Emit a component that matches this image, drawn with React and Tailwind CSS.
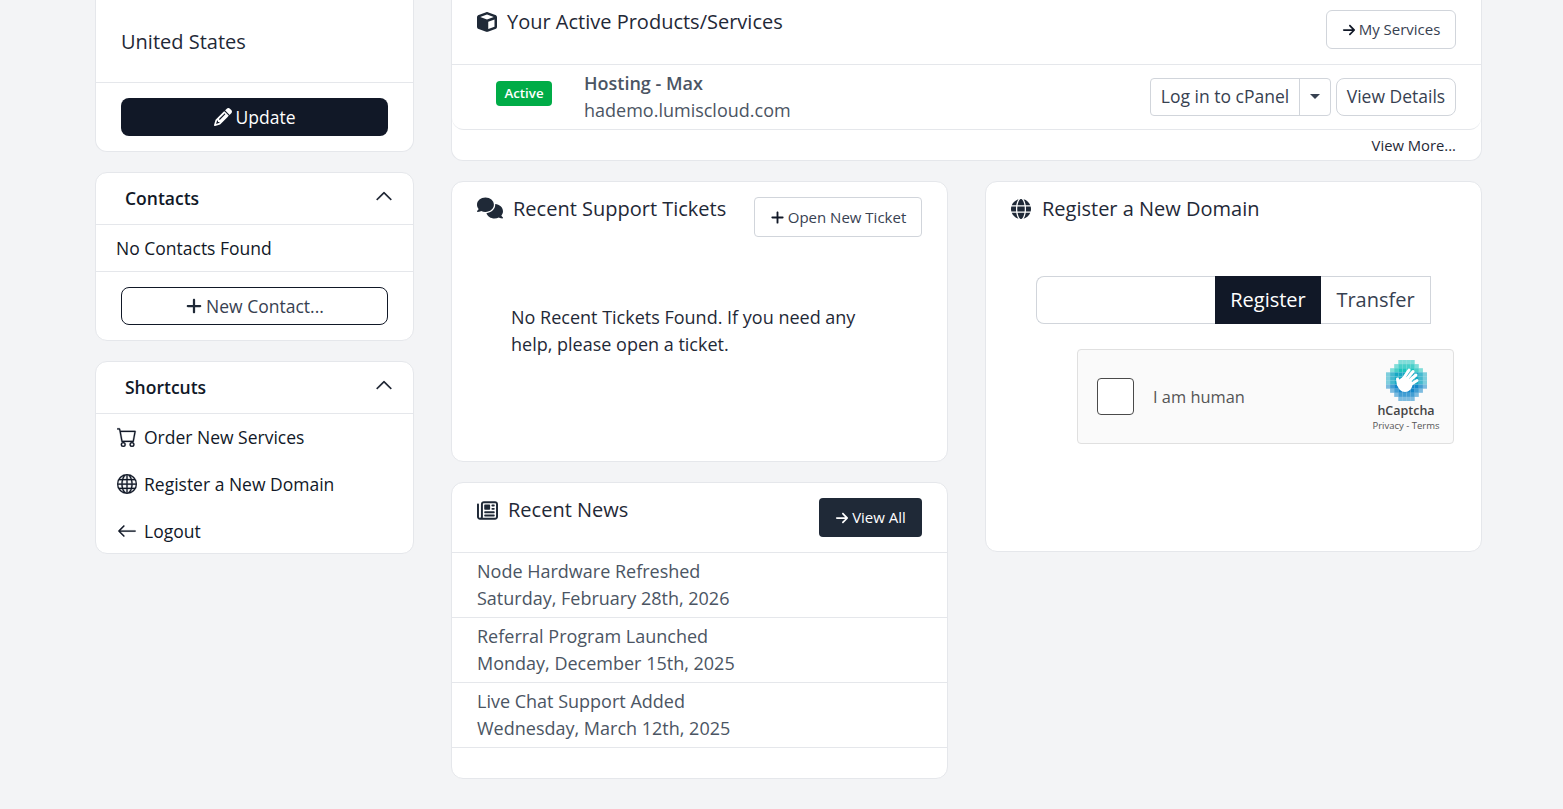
import React from 'react';
import { BsCart, BsGlobe, BsArrowLeft, BsChevronUp } from 'react-icons/bs';
import { FaCube, FaComments, FaRegNewspaper, FaGlobe, FaPencil, FaPlus, FaArrowRight } from 'react-icons/fa6';

const shortcuts = [
  { icon: BsCart, label: 'Order New Services' },
  { icon: BsGlobe, label: 'Register a New Domain' },
  { icon: BsArrowLeft, label: 'Logout' },
];

const news = [
  { title: 'Node Hardware Refreshed', date: 'Saturday, February 28th, 2026' },
  { title: 'Referral Program Launched', date: 'Monday, December 15th, 2025' },
  { title: 'Live Chat Support Added', date: 'Wednesday, March 12th, 2025' },
];

const rowSpans = [[3, 6], [2, 7], [1, 8], [0, 9], [0, 9], [0, 9], [0, 9], [1, 8], [2, 7], [3, 6]];

function HCaptchaLogo() {
  const cells = [];
  rowSpans.forEach(([from, to], r) => {
    for (let c = from; c <= to; c++) {
      const d = Math.hypot(c - 4.5, r - 4.5);
      const fill = r < 3 ? '#1cc4bd' : r < 6 ? '#17a9c4' : '#1487c9';
      cells.push(
        <rect key={`${r}-${c}`} x={c * 4.1} y={r * 4.1} width="4.1" height="4.1" fill={fill} opacity={d > 4 ? 0.55 : d > 3 ? 0.8 : 1} />
      );
    }
  });
  return (
    <svg width="41" height="41" viewBox="0 0 41 41">
      {cells}
      <g stroke="#fff" strokeWidth="3" strokeLinecap="round">
        <path d="M17 19 L23 10" />
        <path d="M20 20 L27 11.5" />
        <path d="M22 22 L30 15" />
        <path d="M24 25 L31 20.5" />
      </g>
      <ellipse cx="19" cy="24.5" rx="7.5" ry="7.5" fill="#fff" />
      <path d="M12.5 25 L11.5 19" stroke="#fff" strokeWidth="3" strokeLinecap="round" />
    </svg>
  );
}

function CollapseHeader({ title }) {
  return (
    <div className="h-[52px] border-b border-[#e5e7eb] pl-[29px] pr-[20px] flex items-center justify-between">
      <span className="text-[17.5px] font-semibold text-[#111827]">{title}</span>
      <BsChevronUp className="text-[18px] text-[#111827] mb-[6px] stroke-current stroke-[0.6px]" />
    </div>
  );
}

export default function App() {
  return (
    <div className="h-[809px] overflow-hidden bg-[#f3f4f6] flex items-start pl-[95px] text-[#111827] font-['Open_Sans',sans-serif]">
      <div className="w-[319px] flex flex-col gap-5">
        <div className="bg-white border border-t-0 border-[#e5e7eb] rounded-b-xl">
          <div className="h-[83px] border-b border-[#e5e7eb] pl-[25px] pt-[27px] text-[20px] leading-[30px] text-[#1f2937]">United States</div>
          <div className="px-[25px] pt-[15px] pb-[15px]">
            <button className="w-full h-[38px] rounded-lg bg-[#111827] text-white text-[17.5px] flex items-center justify-center gap-[4px]">
              <FaPencil className="text-[18px]" /> Update
            </button>
          </div>
        </div>

        <div className="bg-white border border-[#e5e7eb] rounded-xl">
          <CollapseHeader title="Contacts" />
          <div className="h-[47px] border-b border-[#e5e7eb] pl-5 flex items-center text-[17.5px] text-[#111827]">No Contacts Found</div>
          <div className="px-[25px] pt-[15px] pb-[15px]">
            <button className="w-full h-[38px] rounded-lg border border-[#111827] bg-white text-[#374151] text-[17.5px] flex items-center justify-center gap-[3px]">
              <FaPlus className="text-[18px] text-[#1f2937]" /> New Contact...
            </button>
          </div>
        </div>

        <div className="bg-white border border-[#e5e7eb] rounded-xl">
          <CollapseHeader title="Shortcuts" />
          <div className="pl-[21px] flex flex-col h-[139px]">
            {shortcuts.map((s) => (
              <div key={s.label} className="h-[46.7px] shrink-0 flex items-center gap-[7px] text-[17.5px] text-[#111827]">
                <s.icon className="text-[20px] w-5 stroke-current stroke-[0.2px]" />
                <span>{s.label}</span>
              </div>
            ))}
          </div>
        </div>
      </div>

      <div className="w-[1031px] ml-[37px] flex flex-col gap-5">
        <div className="bg-white border border-t-0 border-[#e5e7eb] rounded-b-xl">
          <div className="h-[65px] border-b border-[#e5e7eb] pl-[25px] pr-[25px] flex justify-between items-start">
            <div className="flex items-center gap-[10px] pt-[7px] text-[20px] leading-[30px] text-[#1f2937]">
              <FaCube className="text-[20px] text-[#1f2937]" />
              <span>Your Active Products/Services</span>
            </div>
            <button className="mt-[10px] h-[39px] w-[130px] rounded-md border border-[#d1d5db] bg-white text-[15px] text-[#374151] flex items-center justify-center gap-[3px]">
              <FaArrowRight className="text-[14px] text-[#111827]" /> My Services
            </button>
          </div>
          <div className="h-[65px] border-b border-[#e5e7eb] rounded-b-xl pl-[44px] pr-[25px] flex items-center">
            <span className="w-[56px] h-[25px] -mt-[7px] rounded bg-[#00ac47] text-white text-[13.3px] font-semibold flex items-center justify-center">Active</span>
            <div className="ml-[32px] text-[18px] leading-[27px] text-[#4b5563]">
              <div className="font-semibold">Hosting - Max</div>
              <div>hademo.lumiscloud.com</div>
            </div>
            <div className="ml-auto flex gap-[5px] -mt-[1px]">
              <div className="flex h-[38px] border border-[#d1d5db] rounded text-[17.5px] text-[#374151]">
                <span className="w-[149px] flex items-center justify-center border-r border-[#d1d5db]">Log in to cPanel</span>
                <span className="w-[30px] flex items-center justify-center">
                  <span className="border-x-[5px] border-x-transparent border-t-[5px] border-t-[#374151]" />
                </span>
              </div>
              <span className="w-[120px] h-[38px] border border-[#d1d5db] rounded-lg text-[17.5px] text-[#374151] flex items-center justify-center">View Details</span>
            </div>
          </div>
          <div className="h-[30px] pr-[25px] flex items-center justify-end text-[14.8px] text-[#1f2937]">View More...</div>
        </div>

        <div className="flex items-start gap-[37px]">
          <div className="w-[497px] flex flex-col gap-5">
            <div className="h-[281px] bg-white border border-[#e5e7eb] rounded-xl">
              <div className="pl-[25px] pr-[25px] flex justify-between items-start">
                <div className="flex items-center gap-[10px] pt-[12px] text-[20px] leading-[30px] text-[#1f2937]">
                  <FaComments className="text-[26px] text-[#1f2937] -mt-[2px]" />
                  <span>Recent Support Tickets</span>
                </div>
                <button className="mt-[15px] h-[40px] w-[168px] rounded border border-[#d1d5db] bg-white text-[15px] text-[#374151] flex items-center justify-center gap-[3px]">
                  <FaPlus className="text-[15px] text-[#111827]" /> Open New Ticket
                </button>
              </div>
              <p className="pl-[59px] pr-[80px] pt-[67px] text-[18px] leading-[27px] text-[#1f2937]">
                No Recent Tickets Found. If you need any help, please open a ticket.
              </p>
            </div>

            <div className="h-[297px] bg-white border border-[#e5e7eb] rounded-xl">
              <div className="h-[70px] border-b border-[#e5e7eb] pl-[25px] pr-[25px] flex justify-between items-start">
                <div className="flex items-center gap-[10px] pt-[12px] text-[20px] leading-[30px] text-[#1f2937]">
                  <FaRegNewspaper className="text-[21px] text-[#1f2937]" />
                  <span>Recent News</span>
                </div>
                <button className="mt-[15px] h-[39px] w-[103px] rounded bg-[#1f2937] text-white text-[15px] flex items-center justify-center gap-[3px]">
                  <FaArrowRight className="text-[14px]" /> View All
                </button>
              </div>
              {news.map((n) => (
                <div key={n.title} className="h-[65px] border-b border-[#e5e7eb] pl-[25px] pt-[5px] text-[18px] leading-[27px] text-[#4b5563]">
                  <div>{n.title}</div>
                  <div>{n.date}</div>
                </div>
              ))}
            </div>
          </div>

          <div className="w-[497px] h-[371px] bg-white border border-[#e5e7eb] rounded-xl">
            <div className="flex items-center gap-[11px] pl-[25px] pt-[12px] text-[20px] leading-[30px] text-[#1f2937]">
              <FaGlobe className="text-[20px] text-[#1f2937]" />
              <span>Register a New Domain</span>
            </div>
            <div className="ml-[50px] mt-[52px] flex h-[48px] w-[395px]">
              <input className="w-[179px] border border-r-0 border-[#d1d5db] rounded-l-lg bg-white" />
              <span className="w-[106px] bg-[#111827] text-white text-[20px] flex items-center justify-center">Register</span>
              <span className="w-[110px] border border-l-0 border-[#d1d5db] text-[20px] text-[#374151] flex items-center justify-center">Transfer</span>
            </div>
            <div className="ml-[91px] mt-[25px] w-[377px] h-[95px] bg-[#fafafa] border border-[#e0e0e0] rounded flex items-center pl-[19px] pr-[11px]">
              <span className="w-[37px] h-[37px] bg-white border border-[#4a4a4a] rounded" />
              <span className="ml-[19px] mt-[2px] text-[16.4px] text-[#555]">I am human</span>
              <div className="ml-auto w-[72px] flex flex-col items-center">
                <HCaptchaLogo />
                <div className="text-[12.5px] leading-[15px] font-semibold text-[#444] mt-[2px]">hCaptcha</div>
                <div className="text-[9.5px] leading-[15px] text-[#555] whitespace-nowrap">Privacy - Terms</div>
              </div>
            </div>
          </div>
        </div>
      </div>
    </div>
  );
}
